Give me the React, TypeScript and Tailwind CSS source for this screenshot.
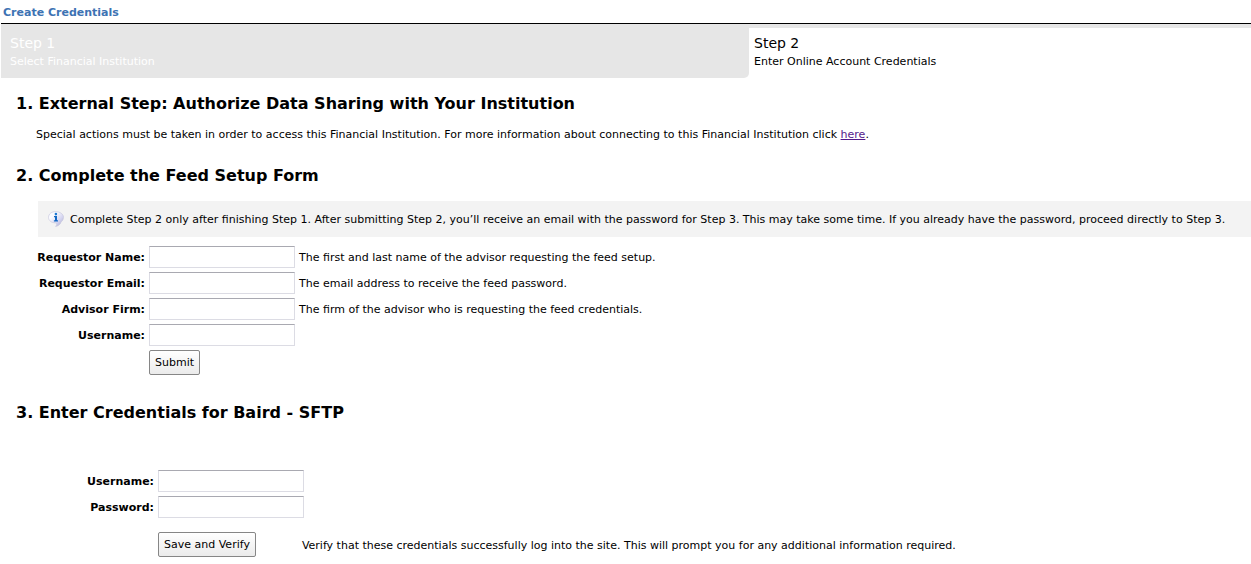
import type { ReactNode } from "react";

interface FieldProps {
  id: string;
  label: string;
  type?: string;
  hint?: string;
}

const feedFields: FieldProps[] = [
  { id: "requestor-name", label: "Requestor Name:", hint: "The first and last name of the advisor requesting the feed setup." },
  { id: "requestor-email", label: "Requestor Email:", type: "email", hint: "The email address to receive the feed password." },
  { id: "advisor-firm", label: "Advisor Firm:", hint: "The firm of the advisor who is requesting the feed credentials." },
  { id: "feed-username", label: "Username:" },
];

const credentialFields: FieldProps[] = [
  { id: "login-username", label: "Username:" },
  { id: "login-password", label: "Password:", type: "password" },
];

function Field({ id, label, type = "text", hint }: FieldProps) {
  return (
    <>
      <label htmlFor={id} className="pt-0.5 text-right font-bold">
        {label}
      </label>
      <div className="flex items-center gap-1">
        <input
          id={id}
          type={type}
          className="h-[22px] w-[146px] shrink-0 border border-[#dcdce4] border-t-[#a9a9b1] bg-white px-1"
        />
        {hint && <span className="pt-0.5">{hint}</span>}
      </div>
    </>
  );
}

function Button({ children }: { children: ReactNode }) {
  return (
    <button
      type="submit"
      className="h-[25px] shrink-0 rounded-xs border border-[#868686] bg-linear-to-b from-white to-[#ebebeb] px-[5px] pt-px"
    >
      {children}
    </button>
  );
}

function InfoIcon() {
  return (
    <svg width="16" height="16" viewBox="0 0 16 16" className="shrink-0" aria-hidden="true">
      <defs>
        <linearGradient id="bubble" x1="0" y1="0" x2="1" y2="1">
          <stop offset="0.3" stopColor="#fafaff" />
          <stop offset="0.65" stopColor="#d4d4f0" />
          <stop offset="1" stopColor="#a8a8cc" />
        </linearGradient>
      </defs>
      <path
        d="M7.600.6C3.500.6.500 3.100.500 6.300c0 3.200 2.900 5.500 6.800 5.600 1 0 1.500.4 1.500 1.200 0 .8-.5 1.600-1.200 2.300 2.600-.3 4.900-2.200 5.500-4.500 1.500-1.100 2.400-2.700 2.400-4.700C15.500 3.100 11.800.6 7.600.6Z"
        fill="url(#bubble)"
        stroke="#c8c8de"
        strokeWidth="0.7"
      />
      <circle cx="7.900" cy="3.100" r="1.300" fill="#1d78d0" />
      <path d="M6 5.100h3v4.100h1v1.200H5.900V9.200H7V6.300H6Z" fill="#1268c4" />
    </svg>
  );
}

export default function App() {
  return (
    <div className="min-h-screen bg-white pl-px font-['DejaVu_Sans',Verdana,sans-serif] text-[11px] leading-4 text-black">
      <header className="border-b border-black pt-[5px] pb-0.5 pl-0.5">
        <h1 className="font-bold text-[#3d73b3]">Create Credentials</h1>
      </header>

      {/* Wizard steps */}
      <ol className="flex">
        <li className="w-[calc(60%-2px)] rounded-br-[5px] bg-[#e6e6e6] px-[9px] pt-[9px] pb-2 text-white">
          <div className="mb-px text-sm leading-5">Step 1</div>
          <div>Select Financial Institution</div>
        </li>
        <li className="flex-1 border-t-4 border-[#e6e6e6] px-[5px] pt-[5px] pb-2">
          <div className="mb-px text-sm leading-5">Step 2</div>
          <div>Enter Online Account Credentials</div>
        </li>
      </ol>

      <main className="pb-2 pl-[15px]">
        <section className="pt-3.5">
          <h2 className="text-base leading-6 font-bold">1. External Step: Authorize Data Sharing with Your Institution</h2>
          <p className="mt-[11px] pl-5">
            Special actions must be taken in order to access this Financial Institution. For more information about
            connecting to this Financial Institution click{" "}
            <a href="#help" className="text-[#551a8b] underline">
              here
            </a>
            .
          </p>
        </section>

        <section className="pt-[21px]">
          <h2 className="text-base leading-6 font-bold">2. Complete the Feed Setup Form</h2>
          <div className="mt-[13px] ml-[22px] flex min-h-9 items-center gap-1.5 bg-[#f3f3f3] pl-2.5">
            <InfoIcon />
            <p className="pt-0.5">
              Complete Step 2 only after finishing Step 1. After submitting Step 2, you’ll receive an email with the
              password for Step 3. This may take some time. If you already have the password, proceed directly to Step 3.
            </p>
          </div>
          <form
            className="mt-[9px] grid grid-cols-[129px_1fr] items-center gap-1"
            onSubmit={(e) => e.preventDefault()}
          >
            {feedFields.map((field) => (
              <Field key={field.id} {...field} />
            ))}
            <div className="col-start-2 flex">
              <Button>Submit</Button>
            </div>
          </form>
        </section>

        <section className="pt-[26px]">
          <h2 className="text-base leading-6 font-bold">3. Enter Credentials for Baird - SFTP</h2>
          <form
            className="mt-[45px] grid grid-cols-[138px_1fr] items-center gap-1"
            onSubmit={(e) => e.preventDefault()}
          >
            {credentialFields.map((field) => (
              <Field key={field.id} {...field} />
            ))}
            <div className="col-start-2 flex items-center gap-[46px] pt-2.5">
              <Button>Save and Verify</Button>
              <span className="pt-0.5">
                Verify that these credentials successfully log into the site. This will prompt you for any additional
                information required.
              </span>
            </div>
          </form>
        </section>
      </main>
    </div>
  );
}
